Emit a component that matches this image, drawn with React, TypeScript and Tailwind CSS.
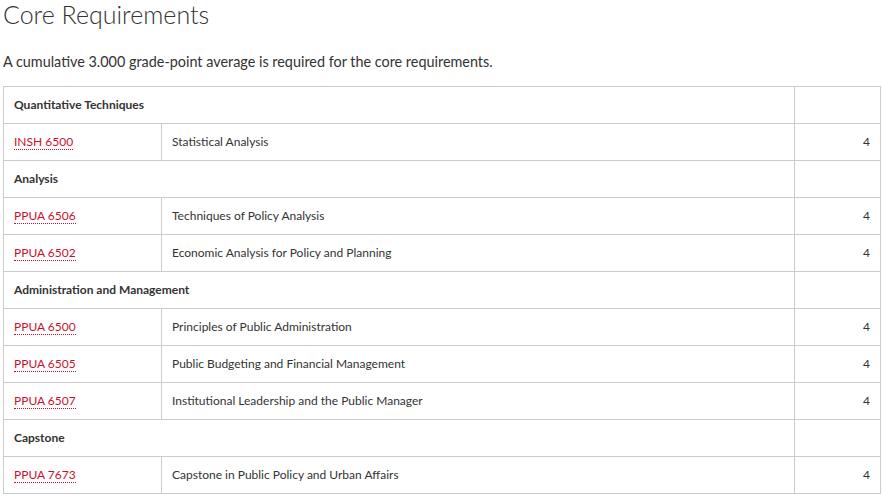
const rows: Array<{ group: string } | { code: string; title: string; hours: string }> = [
  { group: "Quantitative Techniques" },
  { code: "INSH 6500", title: "Statistical Analysis", hours: "4" },
  { group: "Analysis" },
  { code: "PPUA 6506", title: "Techniques of Policy Analysis", hours: "4" },
  { code: "PPUA 6502", title: "Economic Analysis for Policy and Planning", hours: "4" },
  { group: "Administration and Management" },
  { code: "PPUA 6500", title: "Principles of Public Administration", hours: "4" },
  { code: "PPUA 6505", title: "Public Budgeting and Financial Management", hours: "4" },
  { code: "PPUA 6507", title: "Institutional Leadership and the Public Manager", hours: "4" },
  { group: "Capstone" },
  { code: "PPUA 7673", title: "Capstone in Public Policy and Urban Affairs", hours: "4" },
];

export default function App() {
  return (
    <div className="min-h-screen bg-white pl-[3px] pr-[1px] text-[#333] [font-family:Lato,'Liberation_Sans',sans-serif]">
      <h2 className="pt-[1px] text-[25px] font-light leading-[26px] text-[#333]">Core Requirements</h2>
      <p className="mt-[26px] text-[14.4px] leading-[18px]">
        A cumulative 3.000 grade-point average is required for the core requirements.
      </p>
      <table className="mt-[15px] w-[878px] border-collapse text-[12px]">
        <colgroup>
          <col className="w-[158px]" />
          <col className="w-[633px]" />
          <col />
        </colgroup>
        <tbody>
          {rows.map((r, i) =>
            "group" in r ? (
              <tr key={i} className="h-[37px]">
                <td colSpan={2} className="border border-[#ccc] px-[10px] align-middle font-bold">
                  {r.group}
                </td>
                <td className="border border-[#ccc]" />
              </tr>
            ) : (
              <tr key={i} className="h-[37px]">
                <td className="border border-[#ccc] px-[10px] align-middle">
                  <a
                    href="#"
                    className="text-[#c8102e] no-underline [border-bottom:1px_dotted_#c8102e]"
                  >
                    {r.code}
                  </a>
                </td>
                <td className="border border-[#ccc] px-[10px] align-middle">{r.title}</td>
                <td className="border border-[#ccc] px-[10px] text-right align-middle">{r.hours}</td>
              </tr>
            )
          )}
        </tbody>
      </table>
    </div>
  );
}
